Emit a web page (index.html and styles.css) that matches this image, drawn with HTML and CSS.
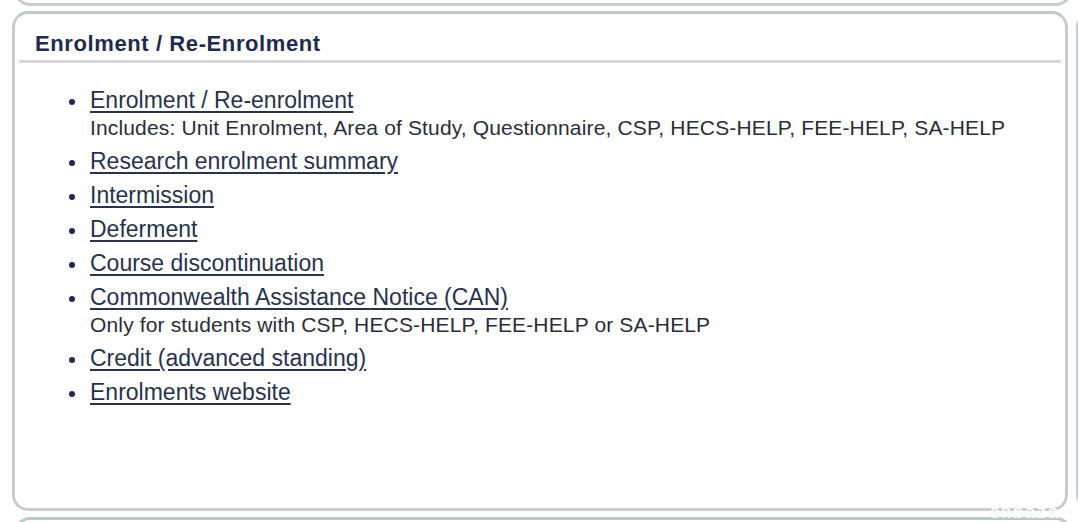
FILE: index.html
```html
<!DOCTYPE html>
<html lang="en">
<head>
    <meta charset="UTF-8">
    <title>Enrolment / Re-Enrolment</title>
    <link rel="stylesheet" href="styles.css">
</head>
<body>
    <div class="panel panel-prev"></div>

    <div class="row">
        <div class="panel panel-main">
            <h2 class="panel-title">Enrolment / Re-Enrolment</h2>
            <ul class="links">
                <li><a href="#">Enrolment / Re-enrolment</a>
                    <div class="note">Includes: Unit Enrolment, Area of Study, Questionnaire, CSP, HECS-HELP, FEE-HELP, SA-HELP</div>
                </li>
                <li><a href="#">Research enrolment summary</a></li>
                <li><a href="#">Intermission</a></li>
                <li><a href="#">Deferment</a></li>
                <li><a href="#">Course discontinuation</a></li>
                <li><a href="#">Commonwealth Assistance Notice (CAN)</a>
                    <div class="note">Only for students with CSP, HECS-HELP, FEE-HELP or SA-HELP</div>
                </li>
                <li><a href="#">Credit (advanced standing)</a></li>
                <li><a href="#">Enrolments website</a></li>
            </ul>
        </div>
        <div class="panel panel-side"></div>
    </div>

    <div class="panel panel-next"></div>

    <div class="watermark">cnbaza</div>
</body>
</html>
```

FILE: styles.css
```css
:root {
    --ink: #1d2b4e;
    --link: #27324d;
    --text: #2a2d3a;
    --edge: #c9cccc;
    --tint: #b9cbc9;
}

body {
    margin: 0;
    background: #fff;
    font-family: "Liberation Sans", Arial, sans-serif;
    overflow: hidden;
    height: 522px;
    position: relative;
}

.panel {
    background: #fff;
    border: 3px solid var(--edge);
    border-top-color: var(--tint);
    border-radius: 16px;
    box-sizing: border-box;
}

.panel-prev {
    height: 40px;
    margin: -34px 6px 0 14px;
    border-top: none;
}

.row {
    display: flex;
    gap: 8px;
    margin-top: 5px;
}

.panel-main {
    flex: none;
    width: 1056px;
    height: 500px;
    margin-left: 12px;
    padding: 0 4px;
}

.panel-side {
    flex: none;
    width: 60px;
    height: 500px;
    border-right: none;
}

.panel-title {
    margin: 0;
    padding: 18px 0 4px 16px;
    font-size: 22px;
    line-height: 24px;
    letter-spacing: 0.6px;
    font-weight: bold;
    color: var(--ink);
    border-bottom: 3px solid #d7d9d9;
}

.links {
    margin: 20px 0 0;
    padding: 0 0 0 71px;
    list-style: none;
    color: var(--link);
}

.links li {
    font-size: 23px;
    line-height: 34px;
}

.links li::before {
    content: "";
    display: inline-block;
    width: 6px;
    height: 6px;
    border-radius: 50%;
    background: var(--ink);
    margin: 0 15px 0 -21px;
    vertical-align: middle;
}

.links a {
    color: var(--link);
    text-decoration: underline;
    text-underline-offset: 3px;
}

.note {
    font-size: 21px;
    line-height: 22px;
    letter-spacing: 0.15px;
    margin: 0 0 5px;
    color: var(--text);
}

.panel-next {
    height: 40px;
    margin: 6px 6px 0 14px;
    border-bottom: none;
}

.watermark {
    position: absolute;
    right: 18px;
    bottom: 1px;
    font-size: 18px;
    line-height: 18px;
    letter-spacing: 2px;
    color: #fff;
    text-shadow: 0 0 1px #d8dcdc;
}
```
